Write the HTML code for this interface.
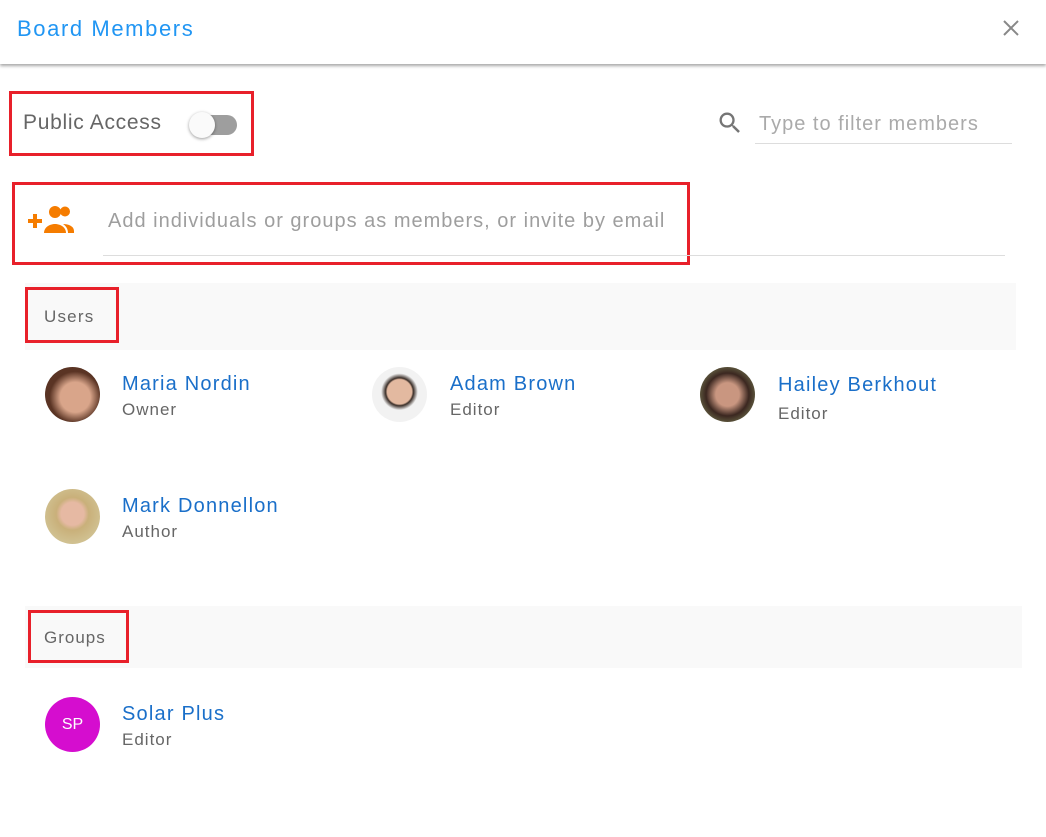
<!DOCTYPE html>
<html><head><style>
*{margin:0;padding:0;box-sizing:border-box}
body{width:1046px;height:837px;background:#fff;font-family:"Liberation Sans",Arial,sans-serif;position:relative;overflow:hidden}
.a{position:absolute}
.hdr{left:0;top:0;width:1046px;height:64px;background:#fff;box-shadow:0 2px 3px rgba(0,0,0,.35)}
.red{position:absolute;border:3px solid #e8202a}
.name{position:absolute;font-size:20px;color:#1a6fc9;white-space:nowrap;letter-spacing:1.2px}
.role{position:absolute;font-size:17px;color:#666;white-space:nowrap;letter-spacing:1px}
.av{position:absolute;width:55px;height:55px;border-radius:50%}
</style></head><body>
<div class="a hdr"></div>
<div class="a" style="left:17px;top:16px;font-size:22px;color:#2196f3;letter-spacing:1.6px">Board Members</div>
<svg class="a" style="left:1002px;top:19px" width="18" height="18" viewBox="0 0 18 18"><path d="M2 2L16 16M16 2L2 16" stroke="#888" stroke-width="2"/></svg>

<div class="red" style="left:9px;top:91px;width:245px;height:65px"></div>
<div class="a" style="left:23px;top:111px;font-size:21px;color:#666;letter-spacing:0.7px">Public Access</div>
<div class="a" style="left:190px;top:115px;width:47px;height:20px;border-radius:10px;background:#9e9e9e"></div>
<div class="a" style="left:189px;top:112px;width:26px;height:26px;border-radius:50%;background:#fafafa;box-shadow:0 1px 3px rgba(0,0,0,.4)"></div>

<svg class="a" style="left:716px;top:109px" width="28" height="28" viewBox="0 0 24 24"><path fill="#757575" d="M15.5 14h-.79l-.28-.27A6.47 6.47 0 0016 9.5 6.5 6.5 0 109.5 16c1.61 0 3.09-.59 4.23-1.57l.27.28v.79l5 4.99L20.49 19l-4.99-5zm-6 0C7.01 14 5 11.99 5 9.5S7.01 5 9.5 5 14 7.01 14 9.5 11.99 14 9.5 14z"/></svg>
<div class="a" style="left:759px;top:113px;font-size:20px;color:#aaa;letter-spacing:1px">Type to filter members</div>
<div class="a" style="left:755px;top:143px;width:257px;height:1px;background:#ddd"></div>

<div class="red" style="left:12px;top:182px;width:678px;height:83px"></div>
<svg class="a" style="left:27px;top:202px" width="48" height="34" viewBox="0 0 48 34"><g fill="#f57c00"><rect x="1" y="17" width="14" height="4"/><rect x="6" y="12" width="4" height="14"/><circle cx="28" cy="10" r="6"/><circle cx="38" cy="9.5" r="5"/><path d="M17 31c0-6 6-9 11-9s11 3 11 9z"/><path d="M36 22c5 0 11 2 11 7v2h-6c0-4-2-7-5-9z"/></g></svg>
<div class="a" style="left:108px;top:210px;font-size:20px;color:#9e9e9e;letter-spacing:1px">Add individuals or groups as members, or invite by email</div>
<div class="a" style="left:103px;top:255px;width:902px;height:1px;background:#ddd"></div>

<div class="a" style="left:25px;top:283px;width:991px;height:67px;background:#f9f9f9"></div>
<div class="red" style="left:25px;top:287px;width:94px;height:56px"></div>
<div class="a" style="left:44px;top:307px;font-size:17px;color:#666;letter-spacing:1.2px">Users</div>

<div class="av" style="left:45px;top:367px;background:radial-gradient(circle at 55% 55%,#d9a58a 0 35%,#5a3424 60%)"></div>
<div class="name" style="left:122px;top:373px">Maria Nordin</div>
<div class="role" style="left:122px;top:400px">Owner</div>

<div class="av" style="left:372px;top:367px;background:radial-gradient(circle at 50% 45%,#e3b9a0 0 30%,#3a2e28 34%,#f2f2f2 45%)"></div>
<div class="name" style="left:450px;top:373px">Adam Brown</div>
<div class="role" style="left:450px;top:400px">Editor</div>

<div class="av" style="left:700px;top:367px;background:radial-gradient(circle at 50% 50%,#c99680 0 30%,#3b2720 55%,#6b6b4a 80%)"></div>
<div class="name" style="left:778px;top:374px">Hailey Berkhout</div>
<div class="role" style="left:778px;top:404px">Editor</div>

<div class="av" style="left:45px;top:489px;background:radial-gradient(circle at 50% 45%,#e6b9a3 0 28%,#c9b07a 40%,#d0c090 70%)"></div>
<div class="name" style="left:122px;top:495px">Mark Donnellon</div>
<div class="role" style="left:122px;top:522px">Author</div>

<div class="a" style="left:25px;top:606px;width:997px;height:62px;background:#f9f9f9"></div>
<div class="red" style="left:28px;top:610px;width:101px;height:53px"></div>
<div class="a" style="left:44px;top:628px;font-size:17px;color:#666;letter-spacing:1px">Groups</div>

<div class="av" style="left:45px;top:697px;background:#d50dcf;color:#fff;font-size:16px;text-align:center;line-height:55px">SP</div>
<div class="name" style="left:122px;top:703px">Solar Plus</div>
<div class="role" style="left:122px;top:730px">Editor</div>
</body></html>
